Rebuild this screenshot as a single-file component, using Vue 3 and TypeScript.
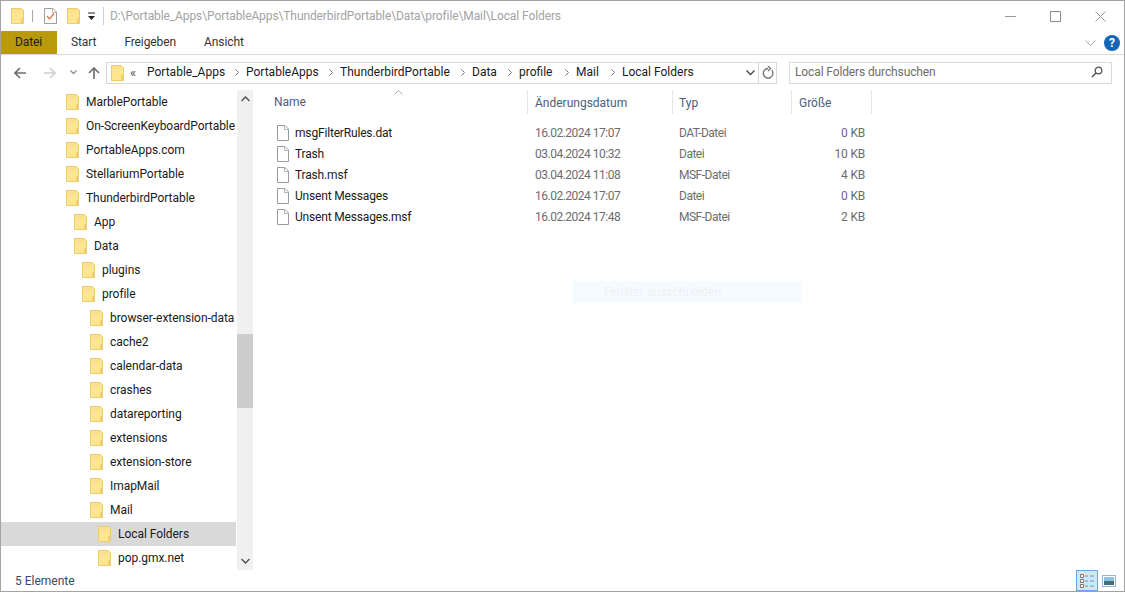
<template>
  <div class="window">
    <svg class="defs" width="0" height="0">
      <symbol id="folder" viewBox="0 0 13 16">
        <path d="M.5 .5h9.500l2.500 2v13H.5z" fill="#fde68f" stroke="#eccd6e" />
        <path d="M10 10v5.500h2.500V10z" fill="#f1cf6c" />
        <path d="M1 1h9v3H1z" fill="#fbe08a" />
      </symbol>
      <symbol id="file" viewBox="0 0 12 16">
        <path d="M.5 .5h7.500l3.500 3.500v11.500H.5z" fill="#fff" stroke="#9b9b9b" />
        <path d="M7.500 .5v4h4" fill="none" stroke="#b5b5b5" />
      </symbol>
    </svg>

    <!-- Titelleiste -->
    <div class="titlebar">
      <svg class="qa-folder"><use href="#folder" /></svg>
      <span class="qa-sep"></span>
      <svg class="qa-check" viewBox="0 0 13 16">
        <path d="M.5 .5h8.500l3.500 3.500v11.500H.5z" fill="#fff" stroke="#a39a96" />
        <path d="M8.500 .5v4h4" fill="none" stroke="#bdbdbd" />
        <path d="M3 8l2.500 3L10 5.500" fill="none" stroke="#dd7a5a" stroke-width="1.400" />
      </svg>
      <svg class="qa-folder second"><use href="#folder" /></svg>
      <svg class="qa-drop" viewBox="0 0 9 8">
        <path d="M1 1h7" stroke="#222" />
        <path d="M1 4h7L4.500 8z" fill="#222" />
      </svg>
      <span class="qa-sep last"></span>
      <span class="path">D:\Portable_Apps\PortableApps\ThunderbirdPortable\Data\profile\Mail\Local Folders</span>
      <div class="win-controls">
        <svg viewBox="0 0 11 11"><path d="M0 5.500h11" stroke="#9a9a9a" /></svg>
        <svg viewBox="0 0 11 11"><path d="M.5 .5h10v10H.5z" fill="none" stroke="#8a8a8a" /></svg>
        <svg viewBox="0 0 11 11"><path d="M.5 .5l10 10M10.500 .5l-10 10" stroke="#9a9a9a" /></svg>
      </div>
    </div>

    <!-- Menüband -->
    <div class="ribbon">
      <span class="tab active">Datei</span>
      <span class="tab">Start</span>
      <span class="tab">Freigeben</span>
      <span class="tab">Ansicht</span>
      <svg class="ribbon-chevron" viewBox="0 0 11 6"><path d="M.5 .5l5 5 5-5" fill="none" stroke="#a5a5a5" /></svg>
      <span class="help">?</span>
    </div>

    <!-- Adresszeile -->
    <div class="navbar">
      <svg class="nav-btn back" viewBox="0 0 12 12"><path d="M12 6H1.500M6 1L1 6l5 5" fill="none" stroke="#6d6d6d" stroke-width="1.600" /></svg>
      <svg class="nav-btn forward" viewBox="0 0 12 12"><path d="M0 6h10.500M6 1l5 5-5 5" fill="none" stroke="#cfcfcf" stroke-width="1.600" /></svg>
      <svg class="nav-down" viewBox="0 0 7 5"><path d="M.5 .5l3 3 3-3" fill="none" stroke="#8d8d8d" stroke-width="1.300" /></svg>
      <svg class="nav-btn up" viewBox="0 0 12 12"><path d="M6 12V1.500M1 6l5-5 5 5" fill="none" stroke="#6d6d6d" stroke-width="1.600" /></svg>
      <div class="address">
        <svg class="addr-folder"><use href="#folder" /></svg>
        <span class="addr-more">«</span>
        <template v-for="(part, i) in crumbs" :key="part.name">
          <svg v-if="i > 0" class="crumb-sep" viewBox="0 0 4 7"><path d="M.5 .5l3 3-3 3" fill="none" stroke="#777" /></svg>
          <span class="crumb" :style="{ width: part.width + 'px' }">{{ part.name }}</span>
        </template>
        <svg class="addr-drop" viewBox="0 0 9 6"><path d="M.5 .5l4 4 4-4" fill="none" stroke="#444" stroke-width="1.300" /></svg>
        <span class="refresh">
          <svg viewBox="0 0 12 13"><path d="M9.800 4.200A4.800 4.800 0 1 1 6 2.500M6 0l2.500 2.500L6 5" fill="none" stroke="#6f6f6f" stroke-width="1.300" /></svg>
        </span>
      </div>
      <div class="search">
        <span>Local Folders durchsuchen</span>
        <svg viewBox="0 0 12 12"><circle cx="7.500" cy="4.500" r="3.300" fill="none" stroke="#555" stroke-width="1.300" /><path d="M5 7l-4 4" stroke="#555" stroke-width="1.600" /></svg>
      </div>
    </div>

    <div class="main">
      <!-- Ordnerbaum -->
      <div class="tree">
        <div class="tree-rows">
          <div
            v-for="node in tree"
            :key="node.name"
            class="tree-row"
            :class="{ selected: node.name === 'Local Folders' }"
            :style="{ paddingLeft: 65 + node.level * 8 + 'px' }"
          >
            <svg class="tree-folder"><use href="#folder" /></svg>
            <span class="tree-name">{{ node.name }}</span>
          </div>
        </div>
        <div class="scrollbar">
          <svg class="arrow" viewBox="0 0 9 6"><path d="M.5 5l4-4 4 4" fill="none" stroke="#555" stroke-width="1.500" /></svg>
          <div class="track"><div class="thumb"></div></div>
          <svg class="arrow" viewBox="0 0 9 6"><path d="M.5 1l4 4 4-4" fill="none" stroke="#555" stroke-width="1.500" /></svg>
        </div>
      </div>

      <!-- Dateiliste -->
      <div class="list">
        <div class="list-head">
          <svg class="sort" viewBox="0 0 9 5"><path d="M.5 4.500l4-4 4 4" fill="none" stroke="#a8a8a8" /></svg>
          <span class="col-name">Name</span>
          <span class="col-date">Änderungsdatum</span>
          <span class="col-type">Typ</span>
          <span class="col-size">Größe</span>
        </div>
        <div class="list-rows">
          <div v-for="f in files" :key="f.name" class="file-row">
            <span class="col-name">
              <svg class="file-icon"><use href="#file" /></svg>
              <span class="file-name">{{ f.name }}</span>
            </span>
            <span class="col-date muted">{{ f.date }}</span>
            <span class="col-type muted">{{ f.type }}</span>
            <span class="col-size muted right">{{ f.size }}</span>
          </div>
        </div>
        <div class="ghost-tip"><span>Fenster ausschneiden</span></div>
      </div>
    </div>

    <!-- Statusleiste -->
    <div class="statusbar">
      <span class="count">5 Elemente</span>
      <div class="views">
        <span class="view-btn active">
          <svg viewBox="0 0 16 16">
            <path d="M1.500 1.500h3v3h-3zM1.500 6.500h3v3h-3zM1.500 11.500h3v3h-3z" fill="#fff" stroke="#8a6f6f" />
            <path d="M6 3h3M11 3h4M6 8h3M11 8h4M6 13h3M11 13h4" stroke="#7c8ea3" />
          </svg>
        </span>
        <span class="view-btn large">
          <svg viewBox="0 0 14 12">
            <rect x=".5" y=".5" width="13" height="11" fill="#fff" stroke="#9fb4c8" />
            <rect x="2" y="2" width="10" height="4" fill="#8fc3e4" />
            <rect x="2" y="6" width="10" height="4" fill="#3f6f7d" />
          </svg>
        </span>
      </div>
    </div>
  </div>
</template>

<script setup lang="ts">
const crumbs = [
  { name: 'Portable_Apps', width: 78 },
  { name: 'PortableApps', width: 73 },
  { name: 'ThunderbirdPortable', width: 111 },
  { name: 'Data', width: 26 },
  { name: 'profile', width: 36 },
  { name: 'Mail', width: 25 },
  { name: 'Local Folders', width: 74 },
]

const tree = [
  { name: 'MarblePortable', level: 0 },
  { name: 'On-ScreenKeyboardPortable', level: 0 },
  { name: 'PortableApps.com', level: 0 },
  { name: 'StellariumPortable', level: 0 },
  { name: 'ThunderbirdPortable', level: 0 },
  { name: 'App', level: 1 },
  { name: 'Data', level: 1 },
  { name: 'plugins', level: 2 },
  { name: 'profile', level: 2 },
  { name: 'browser-extension-data', level: 3 },
  { name: 'cache2', level: 3 },
  { name: 'calendar-data', level: 3 },
  { name: 'crashes', level: 3 },
  { name: 'datareporting', level: 3 },
  { name: 'extensions', level: 3 },
  { name: 'extension-store', level: 3 },
  { name: 'ImapMail', level: 3 },
  { name: 'Mail', level: 3 },
  { name: 'Local Folders', level: 4 },
  { name: 'pop.gmx.net', level: 4 },
]

const files = [
  { name: 'msgFilterRules.dat', date: '16.02.2024 17:07', type: 'DAT-Datei', size: '0 KB' },
  { name: 'Trash', date: '03.04.2024 10:32', type: 'Datei', size: '10 KB' },
  { name: 'Trash.msf', date: '03.04.2024 11:08', type: 'MSF-Datei', size: '4 KB' },
  { name: 'Unsent Messages', date: '16.02.2024 17:07', type: 'Datei', size: '0 KB' },
  { name: 'Unsent Messages.msf', date: '16.02.2024 17:48', type: 'MSF-Datei', size: '2 KB' },
]
</script>

<style>
html,
body {
  margin: 0;
  background: #fff;
  overflow: hidden;
}
</style>

<style scoped>
.window {
  box-sizing: border-box;
  width: 1125px;
  height: 592px;
  display: flex;
  flex-direction: column;
  border: 1px solid #a3a3a3;
  background: #fff;
  font-family: Roboto, "Noto Sans", sans-serif;
  font-size: 12px;
  color: #1a1a1a;
  overflow: hidden;
}

.defs {
  position: absolute;
}

.titlebar {
  height: 30px;
  display: flex;
  align-items: center;
  padding-left: 10px;
  flex-shrink: 0;
}

.qa-folder {
  width: 13px;
  height: 16px;
}

.qa-folder.second {
  margin-left: 10px;
}

.qa-sep {
  width: 1px;
  height: 12px;
  background: #a8a8a8;
  margin: 0 11px 0 8px;
}

.qa-sep.last {
  height: 18px;
  background: #cfcfcf;
  margin: 0 6px 0 7px;
}

.qa-check {
  width: 13px;
  height: 16px;
}

.qa-drop {
  width: 9px;
  height: 8px;
  margin-left: 7px;
}

.path {
  color: #a3a3a3;
  padding-bottom: 1px;
  letter-spacing: -0.1px;
}

.win-controls {
  margin-left: auto;
  display: flex;
  gap: 34px;
  padding-right: 18px;
}

.win-controls svg {
  width: 11px;
  height: 11px;
}

.ribbon {
  height: 24px;
  display: flex;
  align-items: center;
  border-bottom: 1px solid #dadada;
  flex-shrink: 0;
  box-sizing: border-box;
  padding-right: 4px;
}

.tab {
  height: 23px;
  line-height: 23px;
  padding: 0 14px;
  color: #333;
  letter-spacing: -0.1px;
}

.tab.active {
  background: #b99a0a;
  color: #1c1c1c;
  width: 56px;
  box-sizing: border-box;
}

.ribbon-chevron {
  width: 11px;
  height: 6px;
  margin-left: auto;
  margin-right: 8px;
}

.help {
  width: 16px;
  height: 16px;
  border-radius: 50%;
  background: #1467b8;
  color: #fff;
  font-weight: 700;
  font-size: 12px;
  line-height: 16px;
  text-align: center;
}

.navbar {
  height: 35px;
  display: flex;
  align-items: center;
  flex-shrink: 0;
  padding-left: 13px;
}

.nav-btn {
  width: 12px;
  height: 12px;
}

.forward {
  margin-left: 18px;
}

.nav-down {
  width: 7px;
  height: 5px;
  margin-left: 14px;
}

.up {
  margin-left: 11px;
}

.address {
  box-sizing: border-box;
  width: 671px;
  height: 22px;
  margin-left: 6px;
  border: 1px solid #d9d9d9;
  display: flex;
  align-items: center;
  padding-left: 4px;
}

.addr-folder {
  width: 13px;
  height: 16px;
}

.addr-more {
  width: 17px;
  margin-left: 6px;
  color: #555;
  font-size: 13px;
  line-height: 16px;
}

.crumb {
  white-space: nowrap;
  flex-shrink: 0;
  padding-bottom: 1px;
}

.crumb-sep {
  width: 4px;
  height: 7px;
  margin: 0 7px 0 10px;
  flex-shrink: 0;
}

.addr-drop {
  width: 9px;
  height: 6px;
  margin-left: auto;
  margin-right: 3px;
}

.refresh {
  width: 17px;
  height: 20px;
  border-left: 1px solid #d9d9d9;
  display: flex;
  align-items: center;
  justify-content: center;
}

.refresh svg {
  width: 12px;
  height: 13px;
}

.search {
  box-sizing: border-box;
  width: 323px;
  height: 22px;
  margin-left: 12px;
  border: 1px solid #d9d9d9;
  display: flex;
  align-items: center;
  justify-content: space-between;
  padding: 0 8px 1px 5px;
  color: #6d6d6d;
  letter-spacing: -0.12px;
}

.search svg {
  width: 12px;
  height: 12px;
}

.main {
  flex: 1;
  display: flex;
  min-height: 0;
}

.tree {
  width: 254px;
  height: 480px;
  display: flex;
  flex-shrink: 0;
}

.tree-rows {
  width: 235px;
  overflow: hidden;
}

.tree-row {
  box-sizing: border-box;
  height: 24px;
  display: flex;
  align-items: center;
  white-space: nowrap;
  overflow: hidden;
}

.tree-row.selected {
  background: #d9d9d9;
}

.tree-folder {
  width: 13px;
  height: 16px;
  flex-shrink: 0;
  margin-right: 7px;
}

.tree-name {
  letter-spacing: -0.05px;
}

.scrollbar {
  width: 16px;
  margin-left: 1px;
  background: #f0f0f0;
  display: flex;
  flex-direction: column;
  align-items: center;
}

.arrow {
  width: 9px;
  height: 6px;
  margin: 6px 0;
}

.track {
  flex: 1;
  width: 100%;
  padding-top: 226px;
  box-sizing: border-box;
}

.thumb {
  height: 74px;
  background: #cdcdcd;
}

.list {
  position: relative;
  flex: 1;
  padding-left: 13px;
}

.list-head,
.file-row {
  display: flex;
  align-items: center;
}

.list-head {
  position: relative;
  height: 24px;
  color: #4c607a;
}

.list-head span {
  height: 24px;
  line-height: 26px;
  border-right: 1px solid #e5e5e5;
}

.sort {
  position: absolute;
  left: 126px;
  top: 0;
  width: 9px;
  height: 5px;
}

.col-name,
.col-date,
.col-type,
.col-size {
  box-sizing: border-box;
  flex-shrink: 0;
  padding-left: 7px;
}

.col-name {
  width: 260px;
  padding-left: 6px;
  display: flex;
  align-items: center;
}

.col-date {
  width: 145px;
}

.col-type {
  width: 119px;
  padding-left: 6px;
}

.col-size {
  width: 80px;
}

.right {
  text-align: right;
  padding-right: 7px;
}

.list-rows {
  padding-top: 8px;
}

.file-row {
  height: 21px;
}

.file-row .col-name {
  padding-left: 9px;
}

.file-name {
  letter-spacing: -0.17px;
}

.file-icon {
  width: 12px;
  height: 16px;
  flex-shrink: 0;
  margin-right: 6px;
}

.muted {
  color: #6d6d6d;
}

.file-row .col-date,
.file-row .col-type {
  letter-spacing: -0.5px;
}

.file-row .col-size {
  letter-spacing: -0.2px;
}

.ghost-tip {
  position: absolute;
  left: 317px;
  top: 191px;
  width: 230px;
  height: 22px;
  background: #f6fbff;
  color: #eef1f4;
  line-height: 22px;
}

.ghost-tip span {
  margin-left: 32px;
}

.statusbar {
  height: 21px;
  display: flex;
  align-items: center;
  justify-content: space-between;
  flex-shrink: 0;
}

.count {
  margin-left: 14px;
  color: #3a4a63;
}

.views {
  display: flex;
  align-items: center;
  gap: 3px;
  margin-right: 7px;
}

.view-btn {
  box-sizing: border-box;
  width: 22px;
  height: 21px;
  display: flex;
  align-items: center;
  justify-content: center;
  border: 1px solid transparent;
}

.view-btn.active {
  background: #cce8ff;
  border-color: #66a7e8;
}

.view-btn svg {
  width: 16px;
  height: 16px;
}

.view-btn.large {
  width: 16px;
}

.view-btn.large svg {
  width: 14px;
  height: 12px;
}
</style>
